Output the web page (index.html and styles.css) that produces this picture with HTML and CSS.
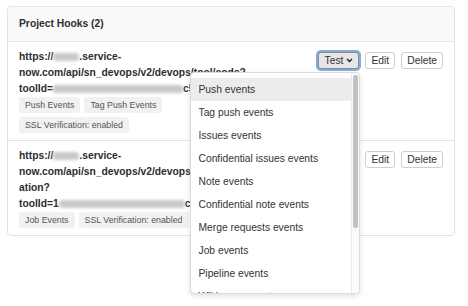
FILE: index.html
```html
<!DOCTYPE html>
<html lang="en">
<head>
    <meta charset="UTF-8">
    <meta name="viewport" content="width=device-width, initial-scale=1.0">
    <title>Project Hooks</title>
    <link rel="stylesheet" href="styles.css">
</head>
<body>
    <div class="page">
        <div class="card">
            <div class="card-header">Project Hooks (2)</div>
            <ul class="hook-list">
                <li class="hook">
                    <div class="hook-info">
                        <div class="hook-url">https://<span class="blur blur-host"></span>.service-<br>now.com/api/sn_devops/v2/devops/tool/code?<br>toolId=<span class="blur blur-id"></span>c5d1e8</div>
                        <div class="badges">
                            <span class="badge">Push Events</span>
                            <span class="badge">Tag Push Events</span>
                            <span class="badge">SSL Verification: enabled</span>
                        </div>
                    </div>
                    <div class="hook-actions">
                        <div class="test-wrap">
                            <button class="btn btn-test is-open">Test
                                <svg class="chevron" width="7" height="5" viewBox="0 0 7 5"><path d="M1 1 L3.5 3.5 L6 1" fill="none" stroke="#222" stroke-width="1.4"/></svg>
                            </button>
                            <div class="dropdown">
                                <ul class="dropdown-list">
                                    <li class="active">Push events</li>
                                    <li>Tag push events</li>
                                    <li>Issues events</li>
                                    <li>Confidential issues events</li>
                                    <li>Note events</li>
                                    <li>Confidential note events</li>
                                    <li>Merge requests events</li>
                                    <li>Job events</li>
                                    <li>Pipeline events</li>
                                    <li>Wiki page events</li>
                                </ul>
                                <div class="scrollbar"><div class="scroll-thumb"></div></div>
                            </div>
                        </div>
                        <button class="btn">Edit</button>
                        <button class="btn">Delete</button>
                    </div>
                </li>
                <li class="hook">
                    <div class="hook-info">
                        <div class="hook-url">https://<span class="blur blur-host"></span>.service-<br>now.com/api/sn_devops/v2/devops/tool/orchestr<br>ation?<br>toolId=1<span class="blur blur-id2"></span>c5d1e8</div>
                        <div class="badges">
                            <span class="badge">Job Events</span>
                            <span class="badge">SSL Verification: enabled</span>
                        </div>
                    </div>
                    <div class="hook-actions">
                        <div class="test-wrap">
                            <button class="btn btn-test">Test
                                <svg class="chevron" width="7" height="5" viewBox="0 0 7 5"><path d="M1 1 L3.5 3.5 L6 1" fill="none" stroke="#222" stroke-width="1.4"/></svg>
                            </button>
                        </div>
                        <button class="btn">Edit</button>
                        <button class="btn">Delete</button>
                    </div>
                </li>
            </ul>
        </div>
    </div>
</body>
</html>
```

FILE: styles.css
```css
*,::after,::before{
    padding: 0;
    margin: 0;
    box-sizing: border-box;
}

body{
    font-family: 'Liberation Sans', Arial, sans-serif;
    color: #2e2e2e;
    background: #fff;
}

.page{
    min-height: 306px;
    padding: 6px 7px;
}

.card{
    width: 448px;
    border: 1px solid #e3e3e3;
    border-radius: 4px;
}

.card-header{
    height: 35px;
    line-height: 34px;
    padding: 0 11px;
    font-size: 10.3px;
    font-weight: bold;
    background: #fafafa;
    border-bottom: 1px solid #e3e3e3;
    border-radius: 4px 4px 0 0;
}

.hook-list{
    list-style: none;
}

.hook{
    display: flex;
    justify-content: space-between;
    padding: 7px 11px 7px 11px;
    border-bottom: 1px solid #e3e3e3;
}

.hook:last-child{
    border-bottom: none;
}

.hook-info{
    width: 250px;
}

.hook-url{
    font-size: 10.3px;
    font-weight: bold;
    line-height: 16px;
    white-space: nowrap;
}

.blur{
    display: inline-block;
    height: 8px;
    background: #c9c9c9;
    border-radius: 3px;
    filter: blur(1.6px);
    vertical-align: -1px;
}

.blur-host{
    width: 26px;
}

.blur-id{
    width: 130px;
}

.blur-id2{
    width: 126px;
}

.badges{
    display: flex;
    flex-wrap: wrap;
    gap: 4px;
}

.badge{
    display: inline-block;
    height: 16px;
    line-height: 16px;
    padding: 0 6px;
    font-size: 8.8px;
    color: #555;
    background: #f1f1f1;
    border-radius: 3px;
}

.hook-actions{
    display: flex;
    align-items: flex-start;
    gap: 6px;
    padding-top: 3px;
}

.test-wrap{
    position: relative;
}

.btn{
    display: flex;
    align-items: center;
    gap: 3px;
    height: 17px;
    padding: 0 5px;
    font-family: inherit;
    font-size: 10.3px;
    color: #333;
    background: #fff;
    border: 1px solid #cfcfcf;
    border-radius: 3px;
}

.btn-test{
    padding: 0 5px 0 6px;
}

.btn-test.is-open{
    background: #e6e6e6;
    border-color: #8a8a8a;
    box-shadow: 0 0 0 2px #86abe0;
}

.chevron{
    display: block;
}

.dropdown{
    position: absolute;
    top: 20px;
    right: -1px;
    width: 170px;
    height: 222px;
    overflow: hidden;
    background: #fff;
    border: 1px solid #dcdcdc;
    border-radius: 4px;
    box-shadow: 0 2px 5px rgba(0, 0, 0, 0.12);
    z-index: 10;
}

.dropdown-list{
    list-style: none;
    padding-top: 5px;
    width: calc(100% - 8px);
}

.dropdown-list li{
    height: 23px;
    line-height: 23px;
    padding-left: 7px;
    font-size: 10.3px;
    color: #333;
    white-space: nowrap;
}

.dropdown-list li.active{
    background: #ececec;
}

.scrollbar{
    position: absolute;
    top: 0;
    right: 0;
    bottom: 0;
    width: 8px;
    background: #fafafa;
    border-left: 1px solid #ebebeb;
}

.scroll-thumb{
    width: 5px;
    height: 153px;
    margin: 2px 0 0 1px;
    background: #c1c1c1;
    border-radius: 3px;
}
```
